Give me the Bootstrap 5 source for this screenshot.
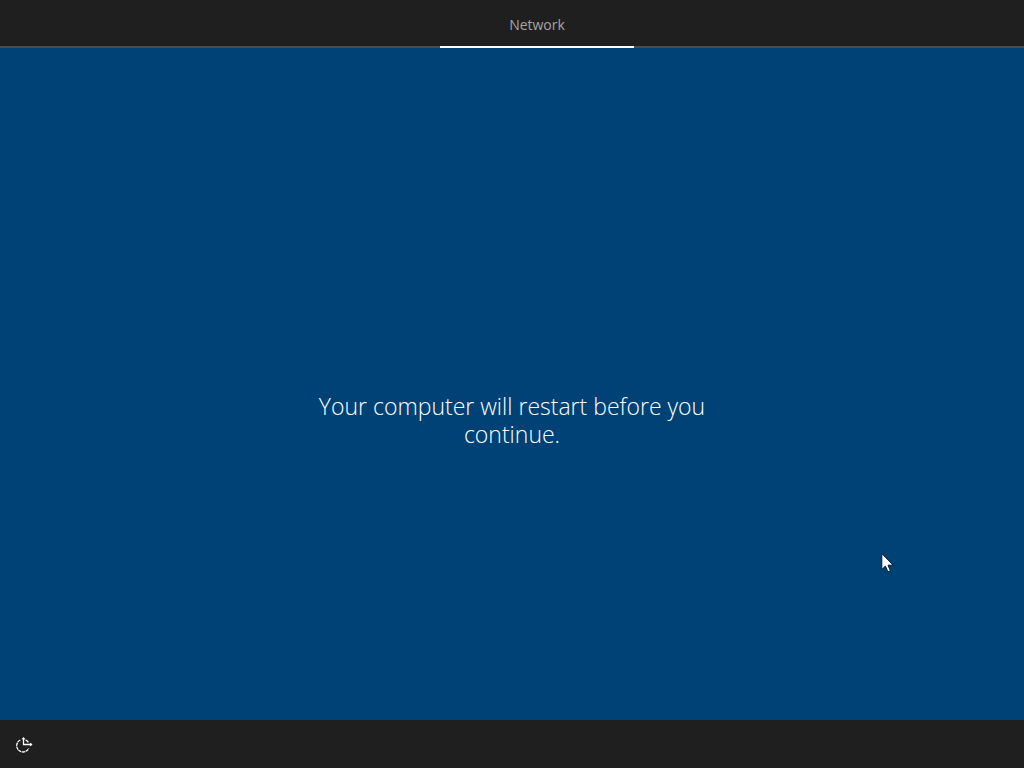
<!DOCTYPE html>
<html lang="en">
<head>
<meta charset="utf-8">
<meta name="viewport" content="width=device-width, initial-scale=1">
<title>Setup</title>
<link href="https://cdn.jsdelivr.net/npm/bootstrap@5.3.0/dist/css/bootstrap.min.css" rel="stylesheet">
<style>
  body { background: #004275; font-family: "Open Sans", "Noto Sans", sans-serif; }
  .setup-bar { background: #1f1f1f; height: 48px; }
  .setup-tabs { border-bottom: 2px solid #4c4c4c; padding-left: 50px; }
  .setup-tabs .nav-link { width: 194px; height: 48px; margin-bottom: -2px; padding: 15px 0 0; border-bottom: 2px solid #fff; border-radius: 0; color: #a5a5a5; font-size: 14px; line-height: 20px; text-align: center; }
  .setup-message { max-width: 400px; margin-top: 72px; color: #fff; font-size: 23px; font-weight: 300; line-height: 28px; }
  .pointer { left: 86%; top: 72%; }
</style>
</head>
<body class="vh-100 d-flex flex-column overflow-hidden">
  <header class="setup-bar flex-shrink-0">
    <nav class="setup-tabs nav h-100 justify-content-center" aria-label="Setup steps">
      <a class="nav-link" href="#network" aria-current="step">Network</a>
    </nav>
  </header>
  <main id="network" class="flex-grow-1 d-flex align-items-center justify-content-center">
    <h1 class="setup-message text-center mb-0">Your computer will restart before you continue.</h1>
  </main>
  <footer class="setup-bar flex-shrink-0 d-flex align-items-center px-3">
    <button type="button" class="btn p-0 border-0 d-flex" aria-label="Ease of access">
      <svg width="18" height="18" viewBox="0 0 18 18" fill="none" stroke="#fff" stroke-width="1.3" aria-hidden="true">
        <path d="M4.3 5A6.3 6.3 0 1 0 12.7 13.4" stroke-dasharray="3.3 .6"/>
        <path d="M9.6 4.8A6.3 6.3 0 0 1 12.4 7.4M7.5 3V9.5H15.5M6.3 4.4L7.5 3L8.7 4.4M14.1 8.3L15.5 9.5L14.1 10.7"/>
      </svg>
    </button>
  </footer>
  <svg class="pointer position-absolute" width="14" height="21" viewBox="0 0 14 21" aria-hidden="true">
    <path d="M.8 .5V16.5L4.4 13.1L6.9 18.8L9.4 17.7L7 12.2H12.1Z" fill="#fff" stroke="#001a33" stroke-width="1"/>
  </svg>
  <script src="https://cdn.jsdelivr.net/npm/bootstrap@5.3.0/dist/js/bootstrap.bundle.min.js"></script>
</body>
</html>
